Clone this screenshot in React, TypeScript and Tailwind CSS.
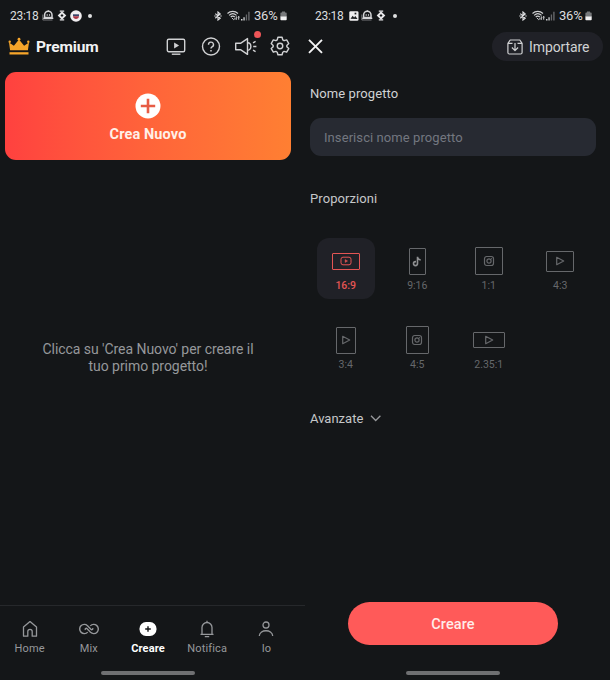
import React from "react";

function RobotIcon({ className }: { className?: string }) {
  return (
    <svg viewBox="0 0 12 11" className={className} fill="none" stroke="#d4d5d7">
      <path d="M2.600 7.600V5a3.700 3.700 0 0 1 7.400 0v2.600z" strokeWidth="1.500" />
      <path d="M6.300 1.300V.2M5.200 4.300v1.400M7.500 4.300v1.400" strokeWidth="1.100" />
      <path d="M.8 4.500V10h9.700" strokeWidth="1" opacity=".5" />
      <path d="M1.300 8.300h10" strokeWidth="1.400" />
    </svg>
  );
}

function DiamondIcon({ className }: { className?: string }) {
  return (
    <svg viewBox="0 0 10 11" className={className} fill="none" stroke="#e8e8ea">
      <path d="M5 2.600 7.900 5.500 5 8.400 2.100 5.500z" strokeWidth="2" />
      <path d="M2.800 1.200h4.400M2.800 9.800h4.400" strokeWidth="1.300" />
    </svg>
  );
}

function ImageBadge({ className }: { className?: string }) {
  return (
    <svg viewBox="0 0 10 10" className={className}>
      <rect x=".3" y=".3" width="9.2" height="9.4" rx="1.3" fill="#eeeeef" />
      <path d="m1.500 7.800 2.200-3 1.400 1.600 1.200-1.400 2.200 3z" fill="#1b1d1f" />
      <rect x="5.6" y="1.7" width="1.7" height="1.7" fill="#1b1d1f" />
    </svg>
  );
}

function FlagBadge({ className }: { className?: string }) {
  return (
    <svg viewBox="0 0 12 12" className={className}>
      <circle cx="6" cy="6" r="5.8" fill="#f1eef0" />
      <path d="M3 4.300h6v1.900H3z" fill="#3a4468" />
      <path d="M3 6.200h6C8.800 8 7.500 8.900 6 8.900S3.200 8 3 6.200z" fill="#ad3646" />
    </svg>
  );
}

function StatusRight() {
  return (
    <div className="ml-auto flex items-center pr-[18px]">
      <svg viewBox="0 0 8 10" className="h-[10px] w-2" fill="none" stroke="#e0e1e3" strokeWidth="1.15">
        <path d="M1.300 2.700 6.200 7.200 4 9V1l2.200 1.900L1.300 7.300" />
        <path d="M.3 5h1.400M6.300 5h1.400" />
      </svg>
      <svg viewBox="0 0 13 11" className="ml-[5px] h-[11px] w-[13px]" fill="none" stroke="#cfd0d2" strokeWidth="1.1">
        <path d="M.5 3.500c3-2.800 7.500-2.800 10.500 0M2.100 5.300c2.200-2 5.200-2 7.400 0M3.700 7c1.200-1.100 2.900-1.100 4.100 0" />
        <path d="m4.900 8 1.800 1.600L8 8.500M9.300 6.300v3.200m-1-1 1 1.200M11.700 9.700V6.500m-.8.900.8-1 .8 1" strokeWidth="1" />
      </svg>
      <svg viewBox="0 0 9 10" className="ml-px h-[10px] w-[9px]">
        <path d="M0 8h1.500v1.600H0zM2.400 6.300h1.300v3.300H2.400z" fill="#d5d6d8" />
        <path d="M4.800 3.500h1.300v6.100H4.800zM7.200.8h1.400v8.800H7.200z" fill="#66686b" />
      </svg>
      <span className="ml-1 w-[25px] whitespace-nowrap text-[13px] leading-4 tracking-[-0.200px]">36%</span>
      <svg viewBox="0 0 7 10" className="ml-px h-[10px] w-[7px]">
        <path d="M2 .5h3v1h1q.7 0 .7.700V6H.4V2.200q0-.700.7-.700H2z" fill="#77797b" />
        <path d="M.4 5.500h6.300v3q0 .8-.8.800H1.200q-.8 0-.8-.8z" fill="#f1f1f2" />
      </svg>
    </div>
  );
}

function StatusBar({ children }: { children: React.ReactNode }) {
  return (
    <div className="flex h-[31px] items-center pl-[10px] text-[#dcdddf]">
      <span className="w-[28px] whitespace-nowrap text-[12px] leading-4 tracking-[-0.300px]">23:18</span>
      {children}
      <StatusRight />
    </div>
  );
}

function HomeIndicator() {
  return <div className="mx-auto h-1 w-[94px] rounded-full bg-[#6f7072]" />;
}

function NavItem({ label, active, children }: { label: string; active?: boolean; children: React.ReactNode }) {
  return (
    <div className={active ? "flex flex-1 flex-col items-center text-white" : "flex flex-1 flex-col items-center text-[#96989b]"}>
      <div className="flex h-5 items-center">{children}</div>
      <span className={active ? "mt-[2px] text-[11px] font-bold leading-4 tracking-[0.100px]" : "mt-[2px] text-[11px] leading-4 tracking-[0.150px]"}>{label}</span>
    </div>
  );
}

type Glyph = "youtube" | "tiktok" | "instagram" | "play";

function GlyphIcon({ kind }: { kind: Glyph }) {
  if (kind === "youtube")
    return (
      <svg viewBox="0 0 12 10" className="h-[10px] w-3" fill="none" stroke="currentColor">
        <rect x="1" y="1.200" width="10" height="7.600" rx="2" />
        <path d="M5.100 3.500v3l2.500-1.500z" fill="currentColor" strokeWidth=".4" />
      </svg>
    );
  if (kind === "tiktok")
    return (
      <svg viewBox="0 0 10 11" className="h-[11px] w-[10px]" fill="none" stroke="#8f9092" strokeWidth="1.600">
        <path d="M5.500.7v6.900a2 2 0 1 1-2-2h.5M5.500 1c.2 1.900 1.300 2.800 3.200 3" />
      </svg>
    );
  if (kind === "instagram")
    return (
      <svg viewBox="0 0 12 12" className="size-3" fill="none" stroke="currentColor" strokeWidth="1.200">
        <rect x="1.500" y="1.500" width="9" height="9" rx="2.200" />
        <circle cx="6" cy="6" r="2.100" />
        <path d="M8.100 3.700h.8" />
      </svg>
    );
  return (
    <svg viewBox="0 0 10 10" className="size-[10px]" fill="none" stroke="currentColor" strokeLinejoin="round" strokeWidth="1.200">
      <path d="M1.700 1.300v7.400L8.700 5z" />
    </svg>
  );
}

const ratios: { label: string; size: string; kind: Glyph; active?: boolean }[] = [
  { label: "16:9", size: "w-7 h-[17px]", kind: "youtube", active: true },
  { label: "9:16", size: "w-[17px] h-[27px]", kind: "tiktok" },
  { label: "1:1", size: "w-7 h-7", kind: "instagram" },
  { label: "4:3", size: "w-7 h-[21px]", kind: "play" },
  { label: "3:4", size: "w-5 h-[27px]", kind: "play" },
  { label: "4:5", size: "w-[23px] h-7", kind: "instagram" },
  { label: "2.35:1", size: "w-8 h-4", kind: "play" },
];

function HomeScreen() {
  return (
    <section className="flex w-[305px] flex-col">
      <StatusBar>
        <RobotIcon className="ml-1 h-[11px] w-3" />
        <DiamondIcon className="ml-[3px] h-[11px] w-[10px]" />
        <FlagBadge className="ml-[3px] size-3" />
        <span className="ml-[6px] size-1 rounded-full bg-[#dedfe0]" />
      </StatusBar>
      <header className="flex h-[31px] items-center pl-2 pr-[15px]">
        <svg viewBox="0 0 22 19" className="h-[19px] w-[22px]">
          <path d="M2.100 13.300 1 5.400l4.900 3.400L11 2.500l5.100 6.300L21 5.400l-1.100 7.900z" fill="#f6a52a" />
          <circle cx="11" cy="2.200" r="1.400" fill="#f6a52a" />
          <circle cx="1.700" cy="4.700" r="1.200" fill="#f6a52a" />
          <circle cx="20.300" cy="4.700" r="1.200" fill="#f6a52a" />
          <path d="M1.500 15.200h19v2.300h-19z" fill="#f6a52a" />
        </svg>
        <h1 className="ml-[6px] text-[15.500px] font-bold leading-5 tracking-[-0.150px] text-[#f2f2f3]">Premium</h1>
        <div className="ml-auto flex items-center text-[#d0d1d3]">
          <svg viewBox="0 0 20 20" className="size-5" fill="none" stroke="currentColor" strokeWidth="1.400">
            <rect x="1.300" y="2.200" width="17.400" height="12.600" rx="1.500" />
            <path d="M5.800 17.200h8.600" />
            <path d="m8.100 5.600 5 2.900-5 2.900z" fill="currentColor" stroke="none" />
          </svg>
          <svg viewBox="0 0 20 20" className="ml-[15px] size-5" fill="none" stroke="currentColor" strokeWidth="1.400">
            <circle cx="10" cy="9.500" r="8.500" />
            <path d="M7.500 7.700a2.500 2.500 0 1 1 3.500 2.200c-.8.400-1 .8-1 1.700" />
            <path d="M10 12.900v1.600" strokeWidth="1.500" />
          </svg>
          <div className="relative ml-[13px] h-5 w-6">
            <svg viewBox="0 0 24 20" className="h-5 w-6" fill="none" stroke="currentColor" strokeLinejoin="round" strokeWidth="1.400">
              <path d="M1.700 6.300h4.800l7-4.700v15.800l-7-4.700H1.700z" />
              <path d="M13.500 5.700c4.500 0 4.500 7.600 0 7.600M19.200 9.500h3.200M19 5.800l2.600-1.500M19 13.200l2.600 1.500" />
            </svg>
            <span className="absolute -top-[6px] right-[-3px] size-[7px] rounded-full bg-[#ef5658]" />
          </div>
          <svg viewBox="0 0 24 24" className="-mt-px ml-3 size-5" fill="none" stroke="currentColor" strokeLinejoin="round" strokeWidth="1.700">
            <path d="M9.500 1.500h5l.8 3.100 1.600 1 3.100-.9 2.500 4.300-2.300 2.300v1.600l2.300 2.200-2.500 4.300-3.100-.9-1.600 1-.8 3H9.500l-.8-3-1.600-1-3.100.9-2.500-4.300 2.300-2.200v-1.600L1.500 9 4 4.700l3.100.9 1.600-1z" />
            <circle cx="12" cy="12" r="3.300" />
          </svg>
        </div>
      </header>
      <button className="ml-[5px] mt-[10px] flex h-[88px] w-[286px] flex-col items-center rounded-[11px] bg-linear-to-r from-[#ff413f] to-[#ff7f32] pt-[21px]">
        <svg viewBox="0 0 26 26" className="size-[26px]">
          <circle cx="13" cy="13" r="12.500" fill="#fff" />
          <path d="M13 5.800v14.400M5.800 13h14.400" stroke="#e75c45" strokeWidth="2.600" />
        </svg>
        <span className="mt-[6px] text-[14.500px] font-bold leading-5 tracking-[0.120px] text-[#fff0e8]">Crea Nuovo</span>
      </button>
      <p className="mt-[181px] w-[296px] text-center text-[14px] leading-[17px] tracking-[-0.050px] text-[#96989b]">
        Clicca su 'Crea Nuovo' per creare il
        <br />
        tuo primo progetto!
      </p>
      <nav className="mt-auto flex h-[66px] w-[305px] border-t border-[#26282b] pr-[9px] pt-[13px]">
        <NavItem label="Home">
          <svg viewBox="0 0 16 18" className="h-[18px] w-4" fill="none" stroke="currentColor" strokeWidth="1.300" strokeLinejoin="round">
            <path d="M1.500 7.100 8 1.600l6.500 5.500v9.100h-4.300v-4.700a2.200 2.200 0 0 0-4.400 0v4.700H1.500z" />
          </svg>
        </NavItem>
        <NavItem label="Mix">
          <svg viewBox="0 0 20 12" className="h-3 w-5" fill="none" stroke="currentColor" strokeWidth="1.400">
            <path d="M8.700 9.100A4.600 4.600 0 1 1 8.500 2.700l3.400 3.600c1 1.100 2.500-.2 1.600-1.200" />
            <path d="M11.300 2.900a4.600 4.600 0 1 1 .2 6.400L8.100 5.700c-1-1.100-2.500.2-1.600 1.200" />
          </svg>
        </NavItem>
        <NavItem label="Creare" active>
          <svg viewBox="0 0 18 16" className="h-4 w-[18px]">
            <rect x=".5" y="1" width="17" height="14" rx="6.500" fill="#fff" />
            <path d="M9 5.200v5.600M6.200 8h5.600" stroke="#141618" strokeWidth="1.400" />
          </svg>
        </NavItem>
        <NavItem label="Notifica">
          <svg viewBox="0 0 16 18" className="h-[18px] w-4" fill="none" stroke="currentColor" strokeWidth="1.300">
            <path d="M1.500 14.300h13M3 14.300V7.500a5 5 0 0 1 10 0v6.800M8 2.500V.8M5.800 16.700h4.400" />
          </svg>
        </NavItem>
        <NavItem label="Io">
          <svg viewBox="0 0 16 18" className="h-[18px] w-4" fill="none" stroke="currentColor" strokeWidth="1.300">
            <circle cx="8" cy="5" r="3" />
            <path d="M1.300 16c.5-7 12.900-7 13.400 0" />
          </svg>
        </NavItem>
      </nav>
      <div className="h-[9px] w-[296px]">
        <HomeIndicator />
      </div>
    </section>
  );
}

function ProjectScreen() {
  return (
    <section className="flex w-[305px] flex-col">
      <StatusBar>
        <ImageBadge className="ml-[6px] size-[10px]" />
        <RobotIcon className="ml-[2px] h-[11px] w-3" />
        <DiamondIcon className="ml-[3px] h-[11px] w-[10px]" />
        <span className="ml-[7px] size-1 rounded-full bg-[#dedfe0]" />
      </StatusBar>
      <header className="flex h-[31px] items-center justify-between pl-[3px] pr-[7px]">
        <svg viewBox="0 0 16 16" className="size-4" fill="none" stroke="#f2f2f3" strokeWidth="1.900">
          <path d="m1 .8 13 13M14 .8l-13 13" />
        </svg>
        <button className="flex h-[29px] w-[111px] items-center rounded-full bg-[#202127] pl-[15px] text-[#d0d1d3]">
          <svg viewBox="0 0 16 16" className="size-4" fill="none" stroke="currentColor" strokeWidth="1.200" strokeLinejoin="round">
            <path d="M.9 4.300 3.200 1h9.600l2.300 3.300v9.200q0 1.500-1.500 1.500H2.400q-1.500 0-1.500-1.500zM.9 4.300h4.600M10.500 4.300h4.600M8 4v7.500M4.900 8.500 8 11.600l3.100-3.100" />
          </svg>
          <span className="ml-[6px] text-[14px] leading-5 tracking-[-0.100px]">Importare</span>
        </button>
      </header>
      <main className="flex flex-1 flex-col pl-[5px] pr-[14px]">
        <label className="mt-[22px] text-[13px] leading-5 tracking-[0.080px] text-[#d0d1d3]">Nome progetto</label>
        <div className="mt-[14px] flex h-[38px] items-center rounded-[11px] bg-[#272a32] pl-[14px] pt-[2px] text-[13px] tracking-[0.080px] text-[#737780]">
          Inserisci nome progetto
        </div>
        <h2 className="mt-[33px] text-[13px] leading-5 tracking-[0.080px] text-[#c6c7c9]">Proporzioni</h2>
        <div className="mt-[29px] grid w-[286px] grid-cols-4 gap-y-[18px]">
          {ratios.map((r) => (
            <div
              key={r.label}
              className={
                r.active
                  ? "mx-auto flex h-[61px] w-[58px] flex-col items-center rounded-xl bg-[#202127] font-medium text-[#e45554]"
                  : "mx-auto flex h-[61px] w-[58px] flex-col items-center text-[#66686b]"
              }
            >
              <div className="flex h-[46px] shrink-0 items-center">
                <div className={`flex items-center justify-center rounded-[1px] border border-current ${r.size}`}>
                  <GlyphIcon kind={r.kind} />
                </div>
              </div>
              <span className="-mt-[6px] text-[10.500px] leading-4">{r.label}</span>
            </div>
          ))}
        </div>
        <div className="mt-[31px] flex items-center text-[#c6c7c9]">
          <span className="text-[13px] leading-5">Avanzate</span>
          <svg viewBox="0 0 12 8" className="ml-[7px] h-2 w-3" fill="none" stroke="#98999c" strokeWidth="1.300">
            <path d="m1 .8 4.700 4.700L10.400.8" />
          </svg>
        </div>
        <button className="mb-[26px] ml-[38px] mt-auto h-[43px] w-[210px] rounded-full bg-[#ff5a59] pt-[3px] text-[14.500px] font-medium tracking-[0.100px] text-[#ffece9]">
          Creare
        </button>
      </main>
      <div className="h-[9px] w-[296px]">
        <HomeIndicator />
      </div>
    </section>
  );
}

export default function App() {
  return (
    <div className="flex h-[680px] w-[610px] overflow-hidden bg-[#141618] font-['Roboto',sans-serif]">
      <HomeScreen />
      <ProjectScreen />
    </div>
  );
}
